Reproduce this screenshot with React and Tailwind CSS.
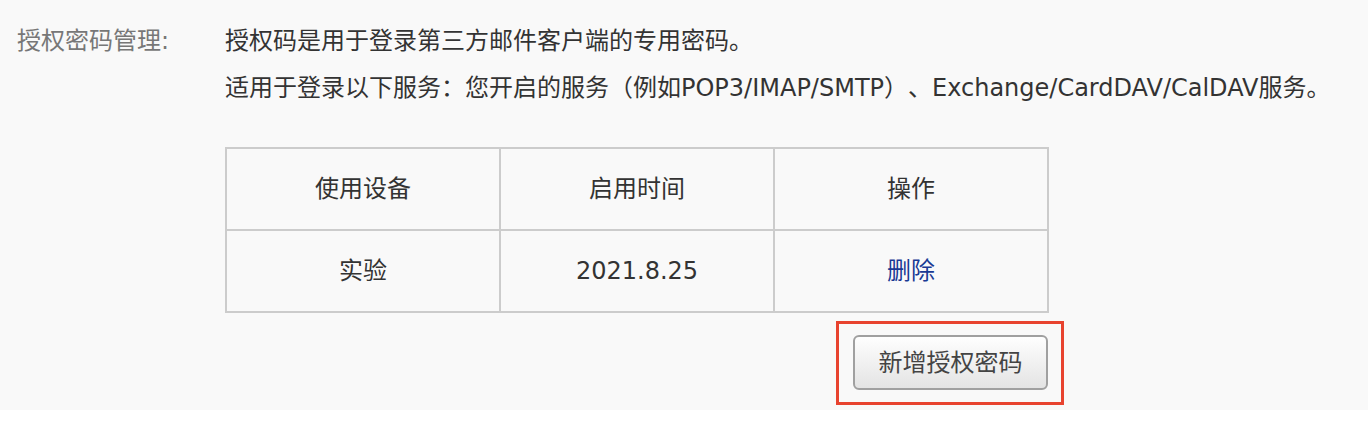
const rows = [
    { device: '实验', date: '2021.8.25' },
]

const App = () => {
    return (
        <div className="bg-white min-h-[430px]" style={{ fontFamily: '"DejaVu Sans", "Noto Sans CJK SC", sans-serif' }}>
            <div className="flex h-[410px] bg-[#f9f9f9] pt-[18px] [text-spacing-trim:space-all]">
                <div className="w-[225px] pl-[17px] text-[24px] leading-[47px] text-[#777]">授权密码管理:</div>

                <div className="flex flex-col text-[24px] text-[#333]">
                    <p className="leading-[47px]">授权码是用于登录第三方邮件客户端的专用密码。</p>
                    <p className="leading-[47px] whitespace-nowrap">适用于登录以下服务：您开启的服务（例如POP3/IMAP/SMTP）、Exchange/CardDAV/CalDAV服务。</p>

                    <div className="w-[824px] mt-[35px]">
                        <table className="w-full table-fixed border-collapse border-2 border-[#ccc] text-center">
                            <thead>
                                <tr className="h-[82px]">
                                    <th className="border-2 border-[#ccc] font-normal">使用设备</th>
                                    <th className="border-2 border-[#ccc] font-normal">启用时间</th>
                                    <th className="border-2 border-[#ccc] font-normal">操作</th>
                                </tr>
                            </thead>
                            <tbody>
                                {rows.map((r) => (
                                    <tr key={r.device} className="h-[82px]">
                                        <td className="border-2 border-[#ccc]">{r.device}</td>
                                        <td className="border-2 border-[#ccc]">{r.date}</td>
                                        <td className="border-2 border-[#ccc]">
                                            <a href="#" className="text-[#1a3a94]">删除</a>
                                        </td>
                                    </tr>
                                ))}
                            </tbody>
                        </table>

                        <div className="flex justify-end mt-[8px] -mr-[15px]">
                            <div className="border-[3px] border-[#e8432f] pt-[11px] pb-[12px] pl-[14px] pr-[13px]">
                                <button className="w-[195px] h-[55px] rounded-[6px] border-2 border-[#a0a0a0] bg-gradient-to-b from-[#fefefe] to-[#e4e4e4] text-[24px] text-[#444]">
                                    新增授权密码
                                </button>
                            </div>
                        </div>
                    </div>
                </div>
            </div>
        </div>
    )
}

export default App
